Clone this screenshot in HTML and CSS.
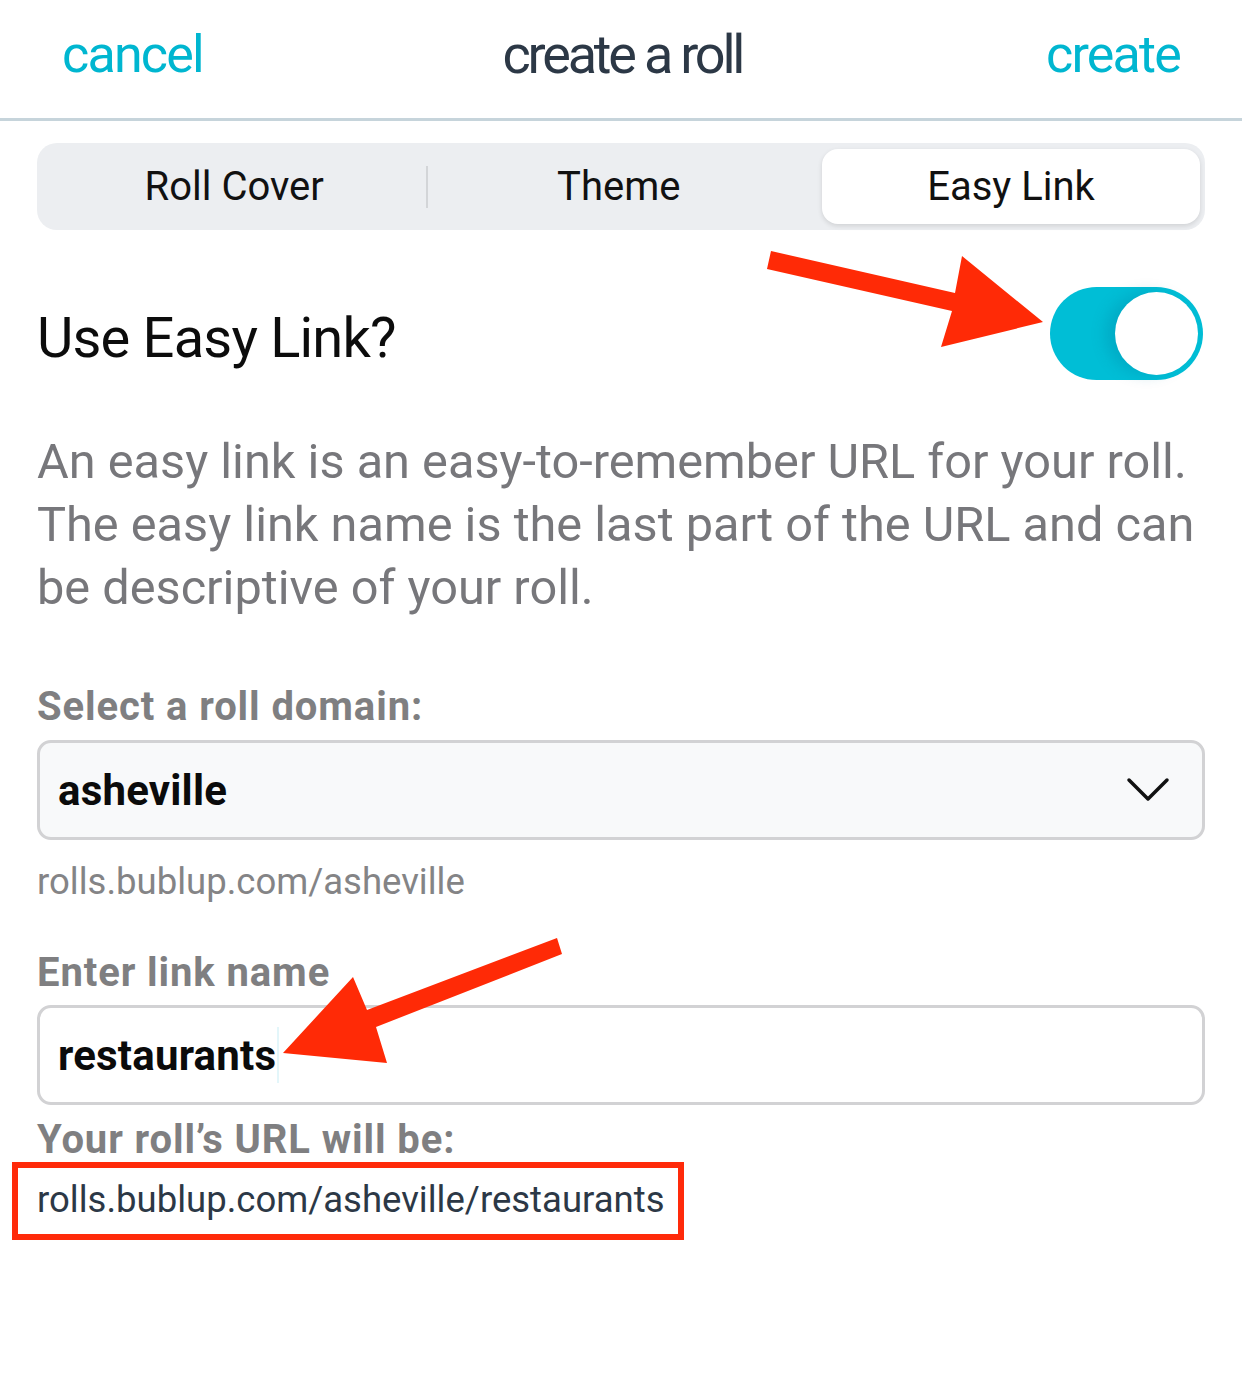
FILE: index.html
```html
<!doctype html>
<html lang="en">
<head>
    <meta charset="UTF-8">
    <meta name="viewport" content="width=device-width, initial-scale=1.0">
    <title>create a roll</title>
    <link rel="stylesheet" href="styles.css">
</head>
<body>
<div class="page">
    <!-- top bar -->
    <div class="topbar">
        <span class="action">cancel</span>
        <span class="title">create a roll</span>
        <span class="action">create</span>
    </div>

    <div class="content">
        <div class="tabs">
            <span class="tab">Roll Cover</span>
            <span class="sep"></span>
            <span class="tab">Theme</span>
            <span class="tab active">Easy Link</span>
        </div>

        <div class="toggle-row">
            <h2>Use Easy Link?</h2>
            <div class="switch on"><span class="knob"></span></div>
        </div>

        <p class="desc">An easy link is an easy-to-remember URL for your roll. The easy link name is the last part of the URL and can be descriptive of your roll.</p>

        <div class="label label-domain">Select a roll domain:</div>
        <div class="field select">
            <span class="value">asheville</span>
            <svg class="chevron" width="44" height="28" viewBox="0 0 44 28">
                <path d="M3 4 L22 23 L41 4" fill="none" stroke="#111" stroke-width="3.5" stroke-linecap="round" stroke-linejoin="round"/>
            </svg>
        </div>
        <div class="hint">rolls.bublup.com/asheville</div>

        <div class="label label-link">Enter link name</div>
        <div class="field input">
            <span class="value">restaurants</span><span class="caret"></span>
        </div>

        <div class="label label-url">Your roll’s URL will be:</div>
        <div class="url-row"><span class="url">rolls.bublup.com/asheville/restaurants</span></div>
    </div>

    <!-- annotation arrows -->
    <svg class="arrows" width="1242" height="1377" viewBox="0 0 1242 1377">
        <polygon fill="#ff2a06" points="771,251 767,269 952,311 941,347 1043,322 962,256 955,293"/>
        <polygon fill="#ff2a06" points="557,938 562,954 376,1027 387,1063 283,1053 353,977 367,1010"/>
    </svg>
</div>
</body>
</html>
```

FILE: styles.css
```css
html, body{
    margin: 0;
    padding: 0;
    background: #fff;
}
.page{
    position: relative;
    width: 1242px;
    height: 1377px;
    overflow: hidden;
    font-family: Roboto, "Liberation Sans", sans-serif;
}

/* top bar */
.topbar{
    display: flex;
    justify-content: space-between;
    align-items: center;
    padding: 0 62px 10px;
    box-sizing: border-box;
    height: 121px;
    border-bottom: 3px solid #c6d4db;
}
.topbar .action{
    color: #00b6d0;
    font-size: 52px;
    letter-spacing: -1.8px;
}
.topbar .title{
    color: #2c3846;
    font-size: 54px;
    letter-spacing: -3.2px;
    margin-left: -4px;
}

.content{
    padding: 0 37px;
}

/* segmented tabs */
.tabs{
    margin-top: 22px;
    height: 87px;
    background: #eceef1;
    border-radius: 20px;
    padding: 6px 5px 6px 6px;
    box-sizing: border-box;
    display: flex;
    align-items: center;
}
.tab{
    flex: 1;
    text-align: center;
    font-size: 40px;
    color: #111;
    height: 75px;
    line-height: 75px;
}
.sep{
    width: 2px;
    height: 42px;
    background: #d3d5d8;
}
.tab.active{
    flex: 0 0 378px;
    background: #fff;
    border-radius: 16px;
    box-shadow: 0 2px 5px rgba(0,0,0,0.12);
    margin-left: 12px;
}

/* toggle row */
.toggle-row{
    display: flex;
    justify-content: space-between;
    align-items: center;
    margin-top: 57px;
    height: 93px;
}
.toggle-row h2{
    margin: 8px 0 0;
    font-weight: normal;
    font-size: 56px;
    letter-spacing: -0.8px;
    color: #0c0c0c;
}
.switch{
    width: 153px;
    height: 93px;
    border-radius: 47px;
    background: #00bed6;
    position: relative;
    margin-right: 2px;
}
.switch .knob{
    position: absolute;
    right: 5px;
    top: 5px;
    width: 83px;
    height: 83px;
    border-radius: 50%;
    background: #fff;
    box-shadow: -10px 0 14px rgba(0,120,150,0.25);
}

.desc{
    margin: 50px -30px 0 0;
    font-size: 48.7px;
    line-height: 63px;
    color: #77777b;
}

/* form labels */
.label{
    font-weight: bold;
    font-size: 40px;
    color: #7f7f81;
    line-height: 44px;
    letter-spacing: 0.9px;
}
.label-domain{
    margin-top: 66px;
}
.label-link{
    margin-top: 47px;
}
.label-url{
    margin-top: 13px;
}

.field{
    height: 100px;
    border: 3px solid #d2d2d4;
    border-radius: 14px;
    box-sizing: border-box;
    display: flex;
    align-items: center;
    padding: 0 32px 0 18px;
    margin-top: 11px;
}
.field .value{
    font-weight: bold;
    font-size: 42px;
    color: #0b0b0b;
    letter-spacing: 0.2px;
}
.select{
    background: #f8f9fa;
    justify-content: space-between;
}
.input{
    background: #fff;
    margin-top: 10px;
}
.caret{
    width: 2px;
    height: 56px;
    background: #e3f6fa;
    margin-left: 1px;
}

.hint{
    margin-top: 20px;
    font-size: 36.5px;
    color: #848486;
    line-height: 44px;
}

.url-row{
    margin-top: 0;
}
.url{
    display: inline-block;
    margin-left: -25px;
    padding: 6px 13px 9px 19px;
    border: 6px solid #ff2a0a;
    font-size: 36.5px;
    line-height: 51px;
    color: #2c3846;
}

/* overlay arrows */
.arrows{
    position: absolute;
    left: 0;
    top: 0;
    pointer-events: none;
}
```
